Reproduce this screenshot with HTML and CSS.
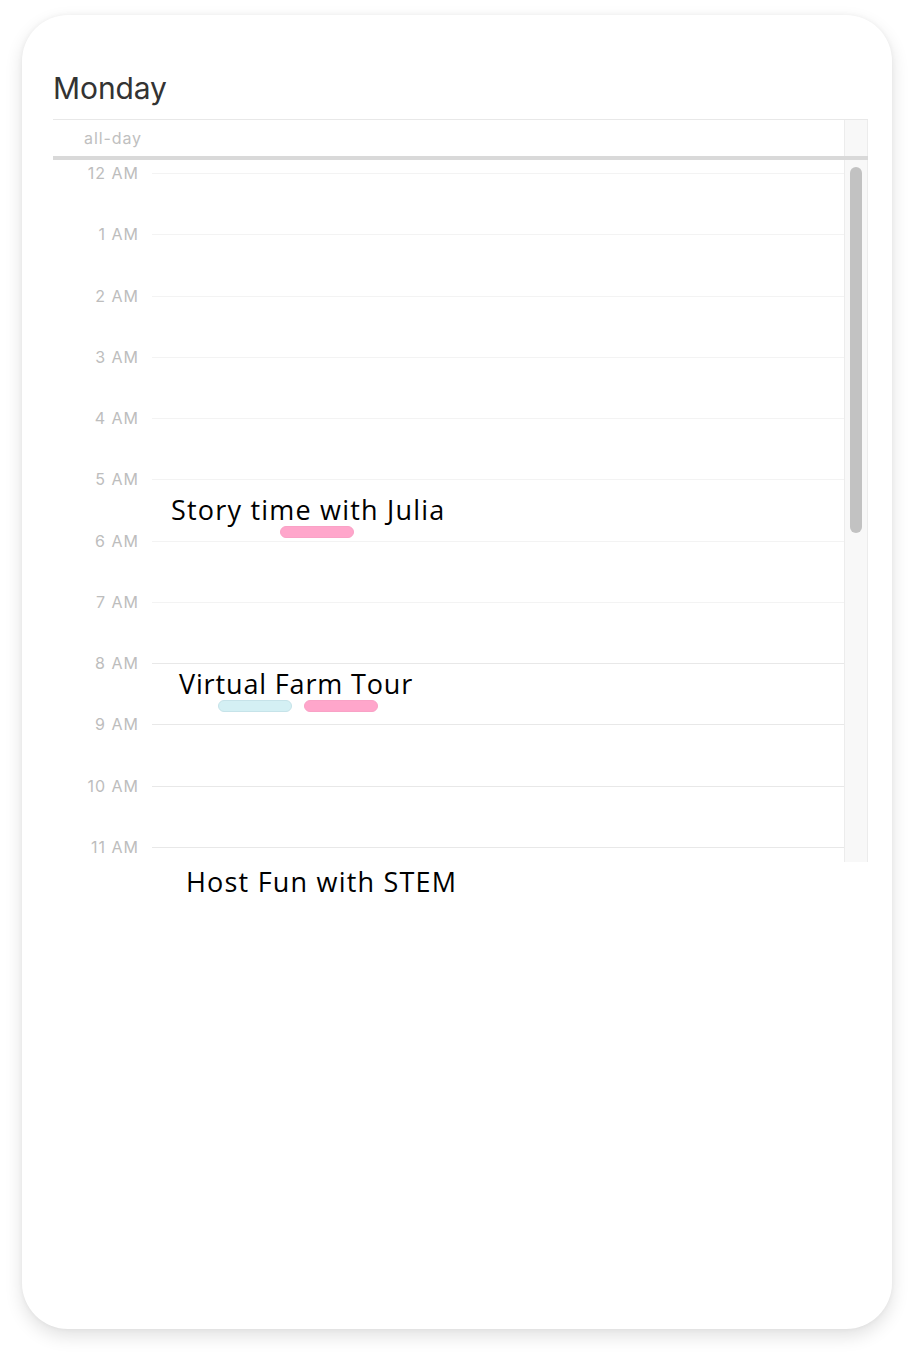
FILE: index.html
```html
<!DOCTYPE html>
<html lang="en">
<head>
<meta charset="utf-8">
<title>Monday</title>
<link rel="stylesheet" href="styles.css">
</head>
<body>
<div class="card">
  <h1 class="title">Monday</h1>
  <div class="cal">
    <div class="allday">
      <div class="allday-label">all-day</div>
      <div class="allday-cell"></div>
      <div class="gutter"></div>
    </div>
    <div class="divider"></div>
    <div class="body">
      <div class="slots">
        <div class="slot"><span class="lbl">12 AM</span><span class="line"></span></div>
        <div class="slot"><span class="lbl">1 AM</span><span class="line"></span></div>
        <div class="slot"><span class="lbl">2 AM</span><span class="line"></span></div>
        <div class="slot"><span class="lbl">3 AM</span><span class="line"></span></div>
        <div class="slot"><span class="lbl">4 AM</span><span class="line"></span></div>
        <div class="slot"><span class="lbl">5 AM</span><span class="line"></span></div>
        <div class="slot"><span class="lbl">6 AM</span><span class="line"></span></div>
        <div class="slot"><span class="lbl">7 AM</span><span class="line"></span></div>
        <div class="slot slot-biz"><span class="lbl">8 AM</span><span class="line"></span></div>
        <div class="slot slot-biz"><span class="lbl">9 AM</span><span class="line"></span></div>
        <div class="slot slot-biz"><span class="lbl">10 AM</span><span class="line"></span></div>
        <div class="slot slot-biz"><span class="lbl">11 AM</span><span class="line"></span></div>
      </div>
      <div class="gutter"><div class="thumb"></div></div>
    </div>
    <div class="event event-story">
      <div class="ev-title">Story time with Julia</div>
      <div class="ev-tags"><span class="tag tag-pink"></span></div>
    </div>
    <div class="event event-farm">
      <div class="ev-title">Virtual Farm Tour</div>
      <div class="ev-tags"><span class="tag tag-cyan"></span><span class="tag tag-pink"></span></div>
    </div>
    <div class="event event-stem">
      <div class="ev-title">Host Fun with STEM</div>
    </div>
  </div>
</div>
</body>
</html>
```
FILE: styles.css
```css
html, body {
  margin: 0;
  padding: 0;
  background: #ffffff;
}
body {
  font-family: Inter, "Liberation Sans", sans-serif;
  padding-bottom: 29px;
}
.card {
  box-sizing: border-box;
  width: 870px;
  height: 1314px;
  margin: 15px 22px 0 22px;
  padding: 55px 24px 0 31px;
  border-radius: 46px;
  background: #ffffff;
  box-shadow: 0 7px 18px rgba(0, 0, 0, 0.12), 0 0 5px rgba(0, 0, 0, 0.05);
}
.title {
  margin: 0 0 12px 0;
  font-size: 30px;
  line-height: 37px;
  font-weight: 400;
  color: #333333;
  letter-spacing: -0.1px;
}
.cal {
  position: relative;
  width: 815px;
}
.allday {
  display: flex;
  height: 36px;
  border-top: 1px solid #e8e8e8;
}
.allday-label {
  box-sizing: border-box;
  width: 99px;
  padding-right: 10px;
  text-align: right;
  font-size: 16px;
  line-height: 36px;
  color: #c0c0c0;
  letter-spacing: 0.9px;
}
.allday-cell {
  flex: 1;
}
.gutter {
  box-sizing: border-box;
  width: 24px;
  background: #f8f8f8;
  border-left: 1px solid #ececec;
  border-right: 1px solid #ececec;
}
.divider {
  height: 4px;
  background: #d9d9d9;
}
.body {
  display: flex;
  height: 702px;
  overflow: hidden;
}
.slots {
  flex: 1;
  padding-top: 13px;
}
.slot {
  display: flex;
  align-items: flex-start;
  height: 61.27px;
}
.lbl {
  box-sizing: border-box;
  width: 99px;
  padding-right: 13px;
  margin-top: -10px;
  text-align: right;
  font-size: 16px;
  line-height: 20px;
  color: #bdbdbd;
  letter-spacing: 1px;
}
.line {
  flex: 1;
  height: 0;
  border-top: 1px solid #f3f3f3;
}
.slot-biz .line {
  border-top-color: #e8e8e8;
}
.thumb {
  width: 12px;
  height: 366px;
  margin: 7px 0 0 5px;
  border-radius: 6px;
  background: #c2c2c2;
}
.event {
  position: absolute;
}
.event-story {
  left: 118px;
  top: 375px;
}
.event-farm {
  left: 126px;
  top: 549px;
}
.event-stem {
  left: 133px;
  top: 747px;
}
.ev-title {
  font-family: "Open Sans", "Noto Sans", sans-serif;
  font-size: 27px;
  line-height: 32px;
  letter-spacing: 1.2px;
  color: #000000;
  white-space: nowrap;
}
.event-farm .ev-title {
  letter-spacing: 0.85px;
}
.event-stem .ev-title {
  letter-spacing: 1.2px;
}
.ev-tags {
  display: flex;
  gap: 12px;
  margin-top: 0;
}
.event-story .ev-tags {
  padding-left: 109px;
}
.event-farm .ev-tags {
  padding-left: 39px;
}
.tag {
  box-sizing: border-box;
  width: 74px;
  height: 12px;
  border-radius: 6px;
}
.tag-pink {
  background: #ffa6cb;
  border: 1px solid #f9a2c6;
}
.tag-cyan {
  background: #d4f0f4;
  border: 1px solid #c6e3e9;
}
```
